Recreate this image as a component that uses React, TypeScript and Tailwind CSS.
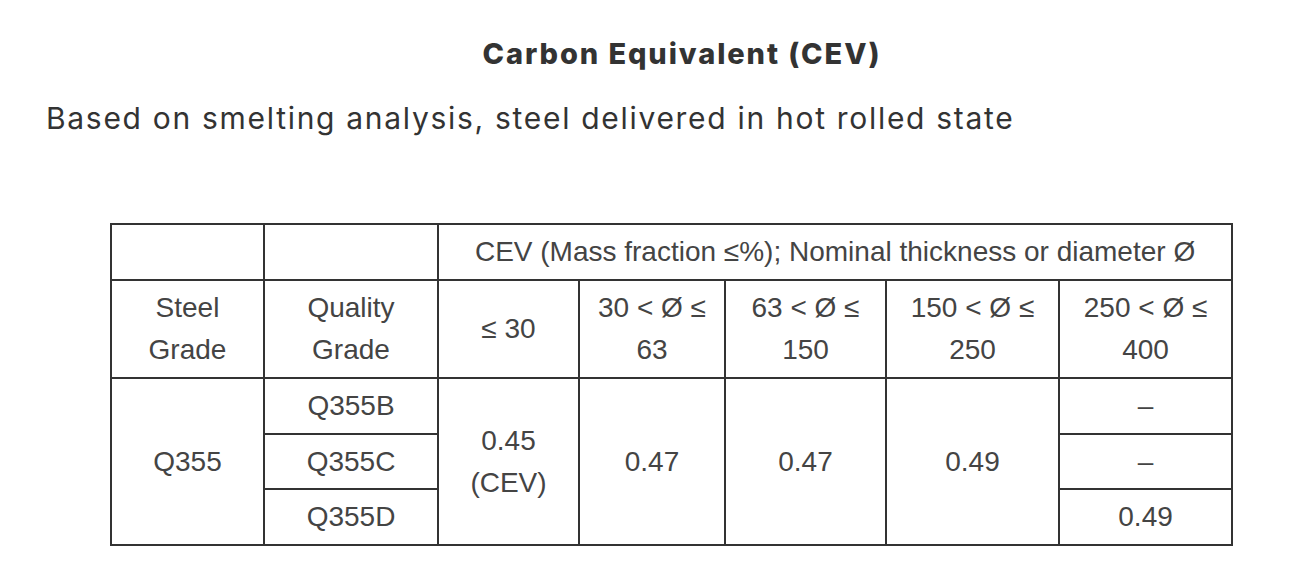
import React from "react";

const cell = "border-2 border-[#333] text-center align-middle p-0";

export default function App() {
  return (
    <div className="bg-white w-[1314px] h-[584px] overflow-hidden">
      <div className="pl-[46px] pr-[20px] pt-[34px]">
        <h2 className="text-center text-[29px] font-extrabold tracking-[1.9px] text-[#333] leading-[40px] ml-[24px] font-['Inter',sans-serif]">
          Carbon Equivalent (CEV)
        </h2>
        <p className="mt-[24px] text-[30px] tracking-[1.7px] leading-[40px] text-[#333] font-['Inter',sans-serif]">
          Based on smelting analysis, steel delivered in hot rolled state
        </p>
        <div className="mt-[85px] pl-[64px]">
          <table className="table-fixed border-collapse w-[1121px] text-[28px] text-[#444] font-['Liberation_Sans',Arial,sans-serif] leading-[42px]">
            <colgroup>
              <col className="w-[153px]" />
              <col className="w-[174px]" />
              <col className="w-[141px]" />
              <col className="w-[146px]" />
              <col className="w-[161px]" />
              <col className="w-[173px]" />
              <col className="w-[173px]" />
            </colgroup>
            <tbody>
              <tr className="h-[56px]">
                <td className={cell}></td>
                <td className={cell}></td>
                <td className={cell} colSpan={5}>
                  CEV (Mass fraction ≤%); Nominal thickness or diameter Ø
                </td>
              </tr>
              <tr className="h-[98px]">
                <td className={cell}>
                  Steel
                  <br />
                  Grade
                </td>
                <td className={cell}>
                  Quality
                  <br />
                  Grade
                </td>
                <td className={cell}>≤ 30</td>
                <td className={cell}>
                  30 &lt; Ø ≤
                  <br />
                  63
                </td>
                <td className={cell}>
                  63 &lt; Ø ≤
                  <br />
                  150
                </td>
                <td className={cell}>
                  150 &lt; Ø ≤
                  <br />
                  250
                </td>
                <td className={cell}>
                  250 &lt; Ø ≤
                  <br />
                  400
                </td>
              </tr>
              <tr className="h-[56px]">
                <td className={cell} rowSpan={3}>
                  Q355
                </td>
                <td className={cell}>Q355B</td>
                <td className={cell} rowSpan={3}>
                  0.45
                  <br />
                  (CEV)
                </td>
                <td className={cell} rowSpan={3}>
                  0.47
                </td>
                <td className={cell} rowSpan={3}>
                  0.47
                </td>
                <td className={cell} rowSpan={3}>
                  0.49
                </td>
                <td className={cell}>–</td>
              </tr>
              <tr className="h-[55px]">
                <td className={cell}>Q355C</td>
                <td className={cell}>–</td>
              </tr>
              <tr className="h-[56px]">
                <td className={cell}>Q355D</td>
                <td className={cell}>0.49</td>
              </tr>
            </tbody>
          </table>
        </div>
      </div>
    </div>
  );
}
